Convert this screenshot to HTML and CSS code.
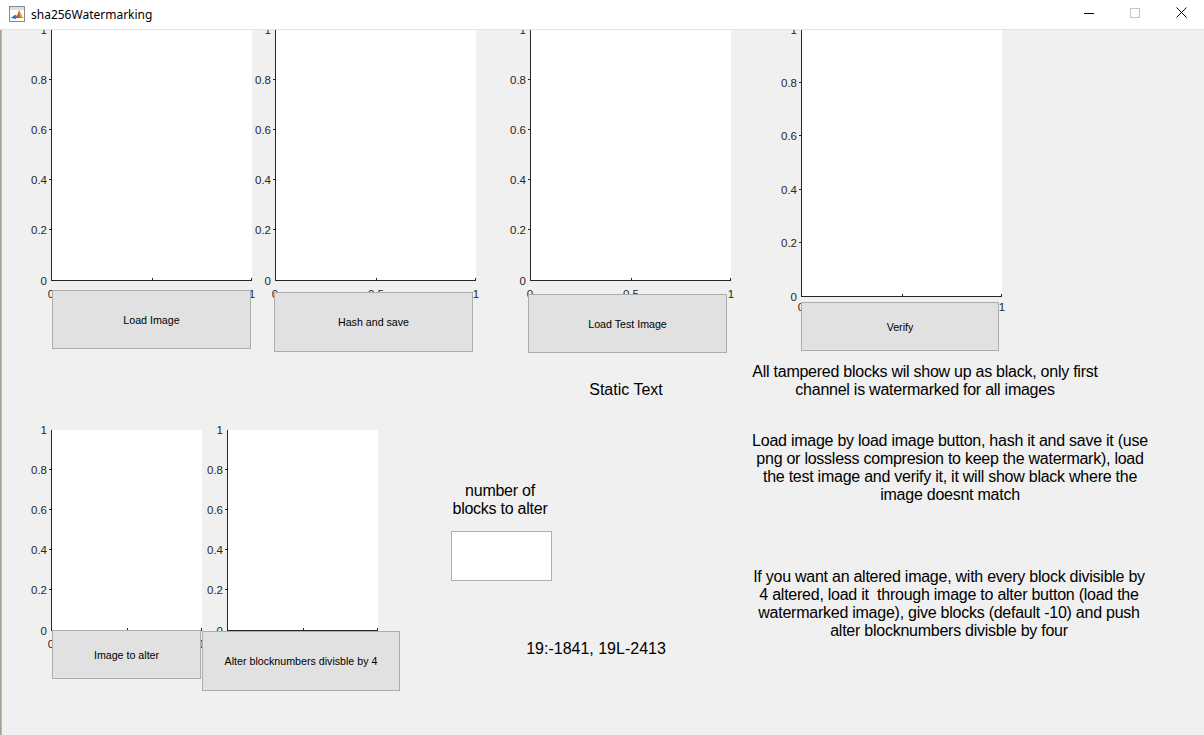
FILE: index.html
```html
<!DOCTYPE html>
<html lang="en">
<head>
<meta charset="utf-8">
<title>sha256Watermarking</title>
<link rel="stylesheet" href="styles.css">
</head>
<body>
<div class="window">
  <header class="titlebar">
    <div class="title-left">
      <svg class="app-icon" width="16" height="16" viewBox="0 0 16 16">
        <rect x="0.5" y="0.5" width="15" height="15" fill="#ffffff" stroke="#8a8a8a"/>
        <rect x="1" y="1" width="14" height="3" fill="#cfe0f2"/>
        <path d="M2 12 L6 9 L8 10 L10 4 L14 12 Z" fill="#e0541a"/>
        <path d="M2 12 L6 9 L8 10 L7 13 Z" fill="#2f74c0"/>
        <path d="M10 4 L12 8 L14 12 L11 11 Z" fill="#f5a623"/>
      </svg>
      <span class="title-text">sha256Watermarking</span>
    </div>
    <div class="controls">
      <div class="ctl">
        <svg width="10" height="10" viewBox="0 0 10 10"><path d="M0 5.5 H10" stroke="#000" stroke-width="1"/></svg>
      </div>
      <div class="ctl">
        <svg width="10" height="10" viewBox="0 0 10 10"><rect x="0.5" y="0.5" width="9" height="9" fill="none" stroke="#c4c4c4"/></svg>
      </div>
      <div class="ctl">
        <svg width="11" height="11" viewBox="0 0 11 11"><path d="M0.5 0.5 L10.5 10.5 M10.5 0.5 L0.5 10.5" stroke="#000" stroke-width="1"/></svg>
      </div>
    </div>
  </header>

  <main class="canvas">
    <!-- axes 1 -->
    <div class="axes ax1">
      <span class="yl v0">0</span><span class="yl v2">0.2</span><span class="yl v4">0.4</span><span class="yl v6">0.6</span><span class="yl v8">0.8</span><span class="yl v10">1</span>
      <i class="yt v2"></i><i class="yt v4"></i><i class="yt v6"></i><i class="yt v8"></i>
      <i class="xt x5"></i><i class="xt x10"></i>
      <span class="xl x0">0</span><span class="xl x5">0.5</span><span class="xl x10">1</span>
    </div>
    <!-- axes 2 -->
    <div class="axes ax2">
      <span class="yl v0">0</span><span class="yl v2">0.2</span><span class="yl v4">0.4</span><span class="yl v6">0.6</span><span class="yl v8">0.8</span><span class="yl v10">1</span>
      <i class="yt v2"></i><i class="yt v4"></i><i class="yt v6"></i><i class="yt v8"></i>
      <i class="xt x5"></i><i class="xt x10"></i>
      <span class="xl x0">0</span><span class="xl x5">0.5</span><span class="xl x10">1</span>
    </div>
    <!-- axes 3 -->
    <div class="axes ax3">
      <span class="yl v0">0</span><span class="yl v2">0.2</span><span class="yl v4">0.4</span><span class="yl v6">0.6</span><span class="yl v8">0.8</span><span class="yl v10">1</span>
      <i class="yt v2"></i><i class="yt v4"></i><i class="yt v6"></i><i class="yt v8"></i>
      <i class="xt x5"></i><i class="xt x10"></i>
      <span class="xl x0">0</span><span class="xl x5">0.5</span><span class="xl x10">1</span>
    </div>
    <!-- axes 4 -->
    <div class="axes ax4">
      <span class="yl v0">0</span><span class="yl v2">0.2</span><span class="yl v4">0.4</span><span class="yl v6">0.6</span><span class="yl v8">0.8</span><span class="yl v10">1</span>
      <i class="yt v2"></i><i class="yt v4"></i><i class="yt v6"></i><i class="yt v8"></i>
      <i class="xt x5"></i><i class="xt x10"></i>
      <span class="xl x0">0</span><span class="xl x5">0.5</span><span class="xl x10">1</span>
    </div>
    <!-- axes 5 -->
    <div class="axes ax5">
      <span class="yl v0">0</span><span class="yl v2">0.2</span><span class="yl v4">0.4</span><span class="yl v6">0.6</span><span class="yl v8">0.8</span><span class="yl v10">1</span>
      <i class="yt v2"></i><i class="yt v4"></i><i class="yt v6"></i><i class="yt v8"></i>
      <i class="xt x5"></i><i class="xt x10"></i>
      <span class="xl x0">0</span><span class="xl x5">0.5</span><span class="xl x10">1</span>
    </div>
    <!-- axes 6 -->
    <div class="axes ax6">
      <span class="yl v0">0</span><span class="yl v2">0.2</span><span class="yl v4">0.4</span><span class="yl v6">0.6</span><span class="yl v8">0.8</span><span class="yl v10">1</span>
      <i class="yt v2"></i><i class="yt v4"></i><i class="yt v6"></i><i class="yt v8"></i>
      <i class="xt x5"></i><i class="xt x10"></i>
      <span class="xl x0">0</span><span class="xl x5">0.5</span><span class="xl x10">1</span>
    </div>

    <button class="btn b-load">Load Image</button>
    <button class="btn b-hash">Hash and save</button>
    <button class="btn b-test">Load Test Image</button>
    <button class="btn b-verify">Verify</button>
    <button class="btn b-alterimg">Image to alter</button>
    <button class="btn b-alterblk">Alter blocknumbers divisble by 4</button>

    <p class="stext t-static">Static Text</p>
    <p class="stext tight t-info1">All tampered blocks wil show up as black, only first<br>channel is watermarked for all images</p>
    <p class="stext tight t-info2">Load image by load image button, hash it and save it (use<br>png or lossless compresion to keep the watermark), load<br>the test image and verify it, it will show black where the<br>image doesnt match</p>
    <p class="stext tight t-info3">If you want an altered image, with every block divisible by<br>4 altered, load it&nbsp; through image to alter button (load the<br>watermarked image), give blocks (default -10) and push<br>alter blocknumbers divisble by four</p>
    <p class="stext tight t-num">number of<br>blocks to alter</p>
    <input class="edit" type="text" value="">
    <p class="stext t-ids">19:-1841, 19L-2413</p>
  </main>
</div>
</body>
</html>
```

FILE: styles.css
```css
* { box-sizing: border-box; }
html, body {
  margin: 0;
  padding: 0;
  width: 1204px;
  height: 735px;
  overflow: hidden;
  background: #f0f0f0;
}
.window {
  width: 1204px;
  height: 735px;
  display: flex;
  flex-direction: column;
  font-family: "Liberation Sans", Arial, sans-serif;
}

/* ---------- title bar ---------- */
.titlebar {
  height: 30px;
  flex: 0 0 30px;
  background: #ffffff;
  border-bottom: 1px solid #e4e4e4;
  display: flex;
  align-items: center;
  justify-content: space-between;
  position: relative;
  z-index: 2;
}
.title-left {
  display: flex;
  align-items: center;
  padding-left: 9px;
  gap: 6px;
}
.app-icon { display: block; margin-top: -1px; }
.title-text {
  font-family: "Noto Sans", "Open Sans", sans-serif;
  font-size: 12px;
  color: #000;
  margin-top: -1px;
}
.controls {
  display: flex;
  height: 29px;
  align-self: flex-start;
}
.ctl {
  width: 46px;
  height: 29px;
  display: flex;
  align-items: center;
  justify-content: center;
  padding-bottom: 4px;
}
.ctl svg { display: block; }

/* ---------- figure canvas ---------- */
.canvas {
  position: relative;
  flex: 1 1 auto;
  background: #f0f0f0;
  overflow: hidden;
  margin: 0;
}
.canvas::before {
  content: "";
  position: absolute;
  left: 0;
  top: 0;
  bottom: 0;
  width: 2px;
  background: linear-gradient(to right, #9a9484, #c8c5b8);
}

/* axes */
.axes {
  position: absolute;
  background: #ffffff;
  border-left: 1px solid #262626;
  border-bottom: 1px solid #262626;
}
.ax1 { left: 51px;  top: 0;     width: 201px; height: 251px; }
.ax2 { left: 275px; top: 0;     width: 201px; height: 251px; }
.ax3 { left: 530px; top: 0;     width: 201px; height: 251px; }
.ax4 { left: 801px; top: 0;     width: 201px; height: 267px; }
.ax5 { left: 51px;  top: 400px; width: 151px; height: 201px; }
.ax6 { left: 227px; top: 400px; width: 151px; height: 201px; }

.yl {
  position: absolute;
  right: calc(100% + 5px);
  font-size: 11.5px;
  line-height: 13px;
  color: #262626;
  transform: translateY(50%);
  white-space: nowrap;
}
.yl.v0, .yt.v0 { bottom: 0; }
.yl.v2, .yt.v2 { bottom: 20%; }
.yl.v4, .yt.v4 { bottom: 40%; }
.yl.v6, .yt.v6 { bottom: 60%; }
.yl.v8, .yt.v8 { bottom: 80%; }
.yl.v10 { bottom: 100%; }
.yl.v0 { bottom: -1px; }

.yt {
  position: absolute;
  left: -3px;
  width: 2px;
  height: 1px;
  background: #262626;
}

.xt {
  position: absolute;
  bottom: 0;
  width: 1px;
  height: 2px;
  background: #262626;
}
.xt.x5 { left: 50%; }
.xt.x10 { right: 0; }

.xl {
  position: absolute;
  top: calc(100% + 8px);
  font-size: 11.5px;
  line-height: 13px;
  color: #262626;
  transform: translateX(-50%);
  white-space: nowrap;
}
.ax4 .xl { top: calc(100% + 5px); }
.xl.x0 { left: -1px; }
.xl.x5 { left: 50%; }
.xl.x10 { left: 100%; }

/* push buttons */
.btn {
  position: absolute;
  margin: 0;
  padding: 0;
  background: #e1e1e1;
  border: 1px solid #adadad;
  border-radius: 0;
  font-family: "Liberation Sans", Arial, sans-serif;
  font-size: 10.67px;
  color: #000;
  text-align: center;
  z-index: 1;
}
.b-load     { left: 52px;  top: 260px; width: 199px; height: 59px; }
.b-hash     { left: 274px; top: 262px; width: 199px; height: 60px; }
.b-test     { left: 528px; top: 264px; width: 199px; height: 59px; }
.b-verify   { left: 801px; top: 272px; width: 198px; height: 49px; }
.b-alterimg { left: 52px;  top: 600px; width: 149px; height: 49px; }
.b-alterblk { left: 202px; top: 601px; width: 198px; height: 60px; }

/* static text */
.stext {
  position: absolute;
  margin: 0;
  font-size: 16px;
  line-height: 18px;
  color: #000;
  text-align: center;
  white-space: nowrap;
}
.tight { letter-spacing: -0.25px; }
.t-static { left: 576px; top: 351px; width: 100px; }
.t-info1  { left: 725px; top: 333px; width: 400px; }
.t-info2  { left: 750px; top: 402px; width: 400px; }
.t-info3  { left: 749px; top: 538px; width: 400px; }
.t-num    { left: 440px; top: 452px; width: 120px; }
.t-ids    { left: 496px; top: 610px; width: 200px; }

/* edit box */
.edit {
  position: absolute;
  left: 451px;
  top: 501px;
  width: 101px;
  height: 50px;
  margin: 0;
  padding: 0;
  background: #ffffff;
  border: 1px solid #adadad;
  border-radius: 0;
  outline: none;
}
```
